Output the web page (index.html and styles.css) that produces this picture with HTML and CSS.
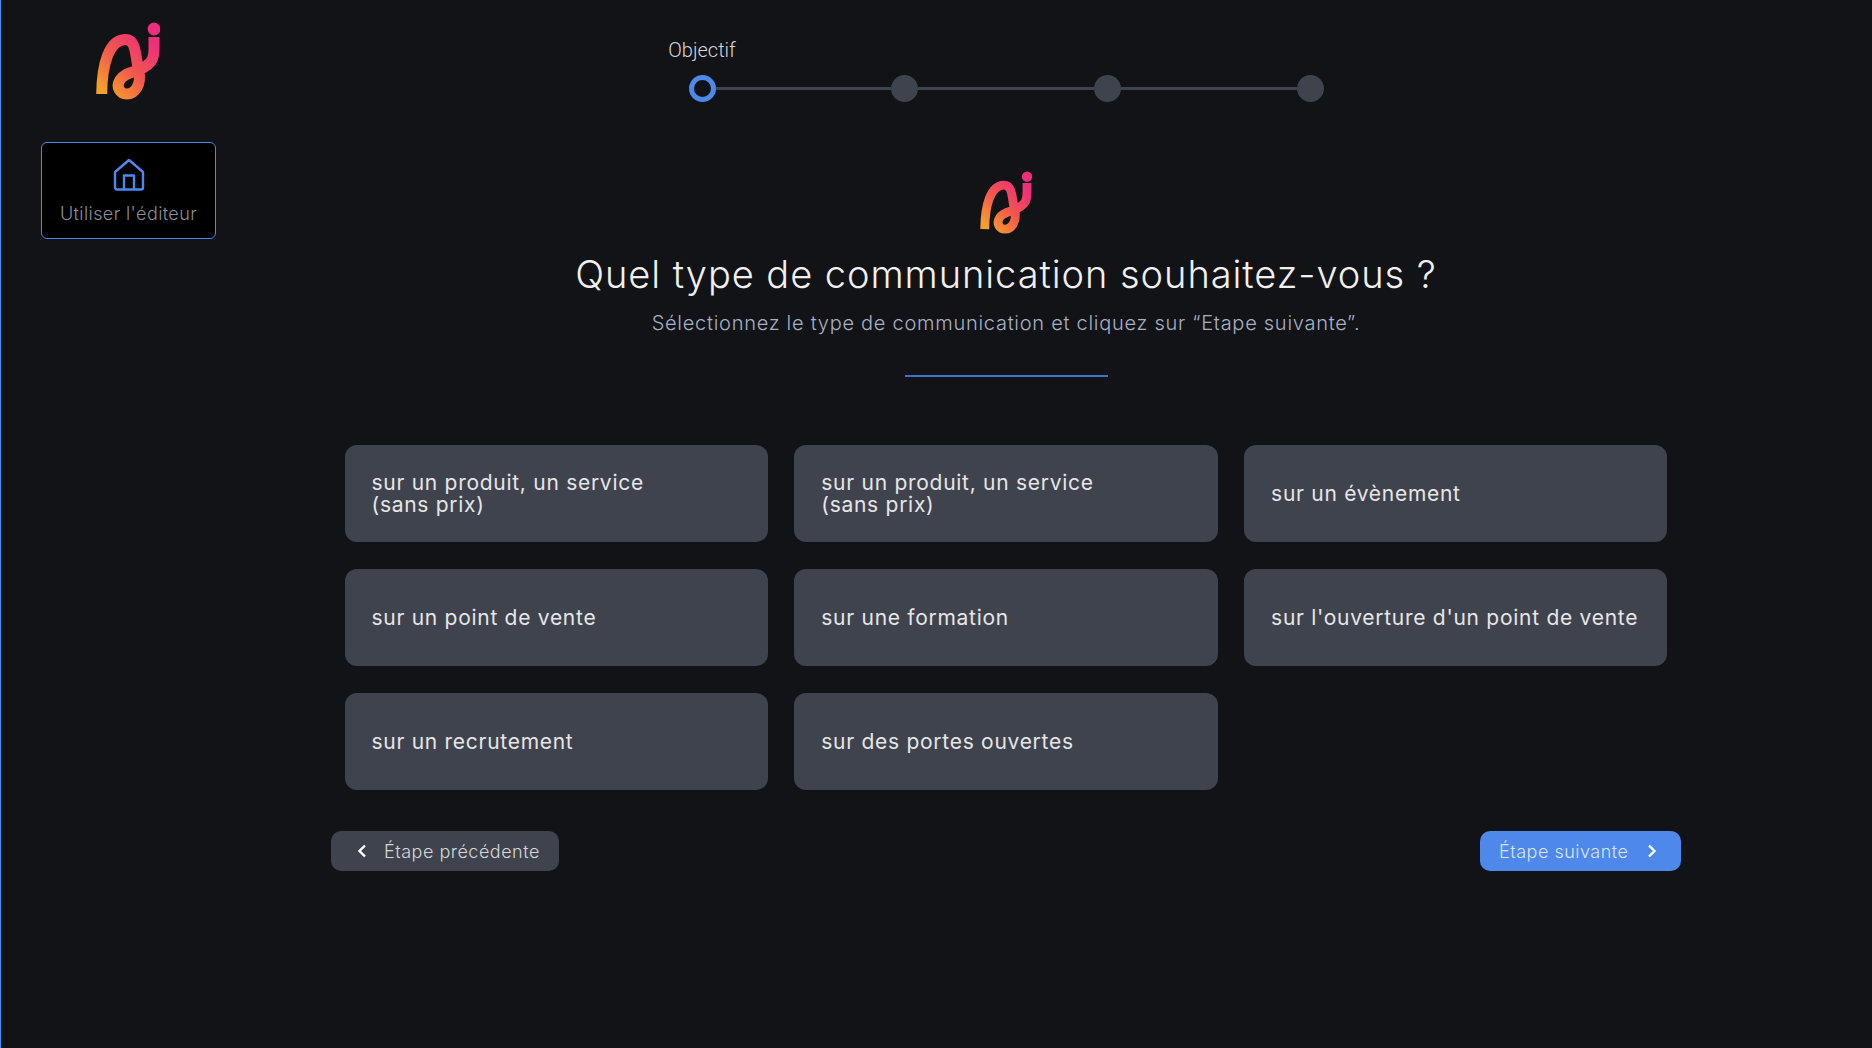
FILE: index.html
```html
<!DOCTYPE html>
<html lang="fr">
<head>
    <meta charset="UTF-8">
    <meta name="viewport" content="width=device-width, initial-scale=1.0">
    <title>Quel type de communication</title>
    <link rel="stylesheet" href="styles.css">
</head>
<body>
    <svg class="defs" aria-hidden="true">
        <defs>
            <linearGradient id="logo-gradient" gradientUnits="userSpaceOnUse" x1="8" y1="70" x2="56" y2="18">
                <stop offset="0" stop-color="#f6a02b"/>
                <stop offset="0.5" stop-color="#f2554f"/>
                <stop offset="1" stop-color="#ee2d7c"/>
            </linearGradient>
            <symbol id="logo" viewBox="0 0 64 78">
                <path d="M5.7 72C6 42 13 18 29 17.500C41 17 39 35 43 50C45.500 62 39 72 31 72C24 72 19.500 65 24 58C29 49.500 42 50.500 50 44C56 40 58 36 58 26V15" fill="none" stroke="url(#logo-gradient)" stroke-width="11"/>
                <circle cx="58" cy="7" r="6.400" fill="#ee2d7c"/>
            </symbol>
        </defs>
    </svg>

    <aside class="sidebar">
        <svg class="logo-small"><use href="#logo"/></svg>
        <a class="editor-link" href="#">
            <svg class="home-icon" viewBox="0 0 32 34" fill="none" stroke="#4d88ea" stroke-width="2.400" stroke-linejoin="round">
                <path d="M2 14L16 2L30 14V29.500A2 2 0 0 1 28 31.500H4A2 2 0 0 1 2 29.500Z"/>
                <path d="M11 31.500V17.500H21V31.500"/>
            </svg>
            <span>Utiliser l'éditeur</span>
        </a>
    </aside>

    <main class="content">
        <div class="stepper">
            <div class="step-label"><span>Objectif</span></div>
            <div class="steps">
                <span class="dot dot-active"></span>
                <span class="line"></span>
                <span class="dot"></span>
                <span class="line"></span>
                <span class="dot"></span>
                <span class="line"></span>
                <span class="dot"></span>
            </div>
        </div>

        <svg class="logo-center"><use href="#logo"/></svg>
        <h1>Quel type de communication souhaitez-vous ?</h1>
        <p class="subtitle">Sélectionnez le type de communication et cliquez sur “Etape suivante”.</p>
        <div class="divider"></div>

        <div class="choices">
            <button class="choice">sur un produit, un service<br>(sans prix)</button>
            <button class="choice">sur un produit, un service<br>(sans prix)</button>
            <button class="choice">sur un évènement</button>
            <button class="choice">sur un point de vente</button>
            <button class="choice">sur une formation</button>
            <button class="choice">sur l'ouverture d'un point de vente</button>
            <button class="choice">sur un recrutement</button>
            <button class="choice">sur des portes ouvertes</button>
        </div>

        <div class="nav-buttons">
            <button class="nav-btn nav-prev">
                <svg class="chevron" viewBox="0 0 10 14" fill="none" stroke="#fff" stroke-width="2.400"><path d="M8 1.500L2.500 7L8 12.500"/></svg>
                Étape précédente
            </button>
            <button class="nav-btn nav-next">
                Étape suivante
                <svg class="chevron" viewBox="0 0 10 14" fill="none" stroke="#fff" stroke-width="2.400"><path d="M2 1.500L7.500 7L2 12.500"/></svg>
            </button>
        </div>
    </main>
</body>
</html>
```

FILE: styles.css
```css
html, body {
    margin: 0;
    height: 100%;
}
body {
    display: flex;
    height: 1048px;
    overflow: hidden;
    background-color: #111317;
    border-left: 1px solid #4a90f0;
    box-sizing: border-box;
    font-family: Inter, "Liberation Sans", sans-serif;
    color: #e8e8e8;
}
.defs {
    position: absolute;
    width: 0;
    height: 0;
}
.sidebar {
    width: 255px;
    flex: none;
    display: flex;
    flex-direction: column;
    align-items: center;
    padding-top: 22px;
    box-sizing: border-box;
}
.logo-small {
    width: 64px;
    height: 78px;
    margin-right: 2px;
}
.editor-link {
    margin-top: 42px;
    width: 175px;
    height: 97px;
    box-sizing: border-box;
    background-color: #000;
    border: 1.5px solid #4d88ea;
    border-radius: 6px;
    display: flex;
    flex-direction: column;
    align-items: center;
    padding-top: 15px;
    color: #8b8f99;
    font-size: 18px;
    font-weight: 300;
    letter-spacing: 0.4px;
    text-decoration: none;
}
.home-icon {
    width: 32px;
    height: 34px;
    margin-bottom: 11px;
}
.content {
    width: 1350px;
    margin-left: 75px;
    display: flex;
    flex-direction: column;
    align-items: center;
}
.stepper {
    width: 635px;
    padding-top: 39px;
}
.step-label {
    width: 27px;
    display: flex;
    justify-content: center;
    white-space: nowrap;
    font-family: Roboto, sans-serif;
    font-size: 20px;
    font-weight: 300;
    line-height: 23px;
    margin-bottom: 13px;
    color: #d8d8d8;
}
.steps {
    display: flex;
    align-items: center;
}
.dot {
    width: 27px;
    height: 27px;
    flex: none;
    box-sizing: border-box;
    border-radius: 50%;
    background-color: #3f434d;
}
.dot-active {
    background-color: transparent;
    border: 5px solid #4d88ea;
}
.line {
    flex: 1;
    height: 3px;
    background-color: #3f434d;
}
.logo-center {
    width: 52px;
    height: 63px;
    margin-top: 69px;
}
h1 {
    margin: 18px 0 0;
    font-size: 38px;
    font-weight: 350;
    line-height: 44px;
    letter-spacing: 0.95px;
    color: #f0f0f0;
}
.subtitle {
    margin: 15px 0 0;
    font-size: 20px;
    font-weight: 350;
    line-height: 24px;
    letter-spacing: 0.73px;
    color: #a8b0c4;
}
.divider {
    width: 203px;
    height: 2px;
    margin-top: 40px;
    background-color: #3c72c9;
}
.choices {
    width: 1323px;
    margin-top: 68px;
    display: grid;
    grid-template-columns: repeat(3, 423.300px);
    grid-auto-rows: 97px;
    gap: 27px 26.500px;
}
.choice {
    padding: 0 0 0 27px;
    border: none;
    border-radius: 12px;
    background-color: #3f434d;
    color: #e6e6e6;
    font-family: inherit;
    font-size: 21px;
    font-weight: 400;
    line-height: 22px;
    letter-spacing: 0.72px;
    text-align: left;
}
.nav-buttons {
    width: 100%;
    margin-top: 41px;
    display: flex;
    justify-content: space-between;
}
.nav-btn {
    height: 40px;
    display: flex;
    align-items: center;
    border: none;
    border-radius: 10px;
    font-family: inherit;
    font-size: 18px;
    font-weight: 300;
    letter-spacing: 0.5px;
    padding: 0;
}
.chevron {
    width: 10px;
    height: 14px;
}
.nav-prev {
    width: 228px;
    padding-left: 26px;
    gap: 17px;
    background-color: #3f434d;
    color: #d8d8d8;
}
.nav-next {
    width: 201px;
    padding-left: 19px;
    gap: 18px;
    background-color: #4d88ea;
    color: #d9e5fa;
}
```
